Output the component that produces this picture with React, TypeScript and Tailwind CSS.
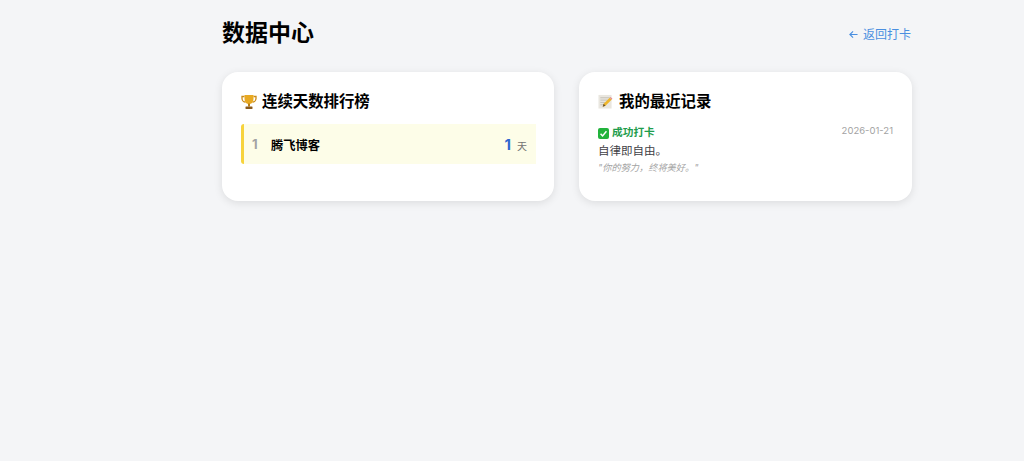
const cjk = { fontFamily: '"Inter", "Noto Sans CJK SC", sans-serif' };

const Trophy = () => (
  <svg viewBox="0 0 16 16" className="w-[16px] h-[16px] shrink-0">
    <path d="M3.5 2.5H1v2C1 6.5 2.8 8 4.5 8M12.5 2.5H15v2C15 6.5 13.2 8 11.5 8" fill="none" stroke="#c98a16" strokeWidth="1.3" />
    <path d="M3.5 1h9v4c0 3-1.8 5-4.5 5S3.5 8 3.5 5z" fill="#e8a922" />
    <rect x="7" y="9.5" width="2" height="3" fill="#b97f14" />
    <rect x="4.5" y="12.5" width="7" height="2.5" rx=".4" fill="#8a5a1c" />
  </svg>
);

const Memo = () => (
  <svg viewBox="0 0 16 16" className="w-[15px] h-[15px] shrink-0">
    <rect x="0.5" y="1" width="14" height="14.5" fill="#e9e6df" />
    <path d="M2.5 4h10M2.5 6.5h8M2.5 9h5M2.5 11.5h4" stroke="#b9b5ac" strokeWidth=".8" />
    <path d="M5 13.5l1-3 6.5-6.5 2 2L8 12.5z" fill="#eeb62c" />
    <path d="M5 13.5l1-3 2 2z" fill="#6b5330" />
    <path d="M12.5 4l.9-.9 2 2-.9.9z" fill="#e58a8a" />
  </svg>
);

const Check = () => (
  <svg viewBox="0 0 12 12" className="w-[11px] h-[11px] shrink-0">
    <rect width="12" height="12" rx="2.2" fill="#22b33c" />
    <path d="M2.8 6.2l2.2 2.4 4.2-5" fill="none" stroke="#fff" strokeWidth="1.6" />
  </svg>
);

const Arrow = () => (
  <svg viewBox="0 0 10 10" className="w-[9px] h-[9px] shrink-0" fill="none" stroke="#4a8fe0" strokeWidth="1.3">
    <path d="M9.5 5H1M4.5 1.5L1 5l3.5 3.5" />
  </svg>
);

export default function App() {
  return (
    <div className="min-h-[461px] bg-[#f4f5f7] px-[222px] pt-[18px]" style={cjk}>
      {/* header */}
      <div className="w-[690px] flex items-center justify-between h-[31px]">
        <h1 className="text-[23px] leading-[31px] font-bold text-black">数据中心</h1>
        <a className="flex items-center gap-[5px] pt-[2px] pr-[1px] text-[12px] leading-[16px] text-[#4a8fe0]">
          <Arrow />
          <span>返回打卡</span>
        </a>
      </div>

      <div className="w-[690px] mt-[23px] grid grid-cols-[332px_333px] gap-[25px]">
        {/* leaderboard */}
        <div className="h-[129px] bg-white rounded-[16px] shadow-[0_2px_8px_rgba(0,0,0,0.1)] pl-[19px] pr-[18px] pt-[19px]">
          <div className="flex items-center gap-[5px] h-[21px]">
            <Trophy />
            <h2 className="text-[15.4px] font-bold text-black">连续天数排行榜</h2>
          </div>
          <div className="mt-[12px] h-[40px] flex items-center bg-[#fdfde8] border-l-[3px] border-[#f7d33c] rounded-l-[3px] pl-[8px] pr-[9px]">
            <span className="w-[19px] pt-[1px] text-[13px] font-bold text-[#a3a3a3]">1</span>
            <span className="pt-[4px] text-[12.25px] font-semibold text-black">腾飞博客</span>
            <span className="ml-auto pt-[3px] text-[15px] font-bold text-[#2f66cf]">1</span>
            <span className="ml-[6px] mt-[4px] text-[10px] text-[#737373]">天</span>
          </div>
        </div>

        {/* recent records */}
        <div className="h-[129px] bg-white rounded-[16px] shadow-[0_2px_8px_rgba(0,0,0,0.1)] px-[19px] pt-[19px]">
          <div className="flex items-center gap-[6px] h-[21px]">
            <Memo />
            <h2 className="text-[15.4px] font-bold text-black">我的最近记录</h2>
          </div>
          <div className="mt-[13px] flex items-start justify-between h-[16px]">
            <div className="flex items-center gap-[3px] pt-[1px]">
              <Check />
              <span className="text-[10.7px] leading-[14px] font-semibold text-[#1f9d4d]">成功打卡</span>
            </div>
            <span className="text-[9.5px] leading-[12px] text-[#a3a3a3]">2026-01-21</span>
          </div>
          <p className="mt-[2px] text-[11.5px] leading-[17px] text-[#3f3f46]">自律即自由。</p>
          <p className="mt-[1px] text-[9.2px] leading-[14px] italic text-[#a3a3a3]">"你的努力，终将美好。"</p>
        </div>
      </div>
    </div>
  );
}
